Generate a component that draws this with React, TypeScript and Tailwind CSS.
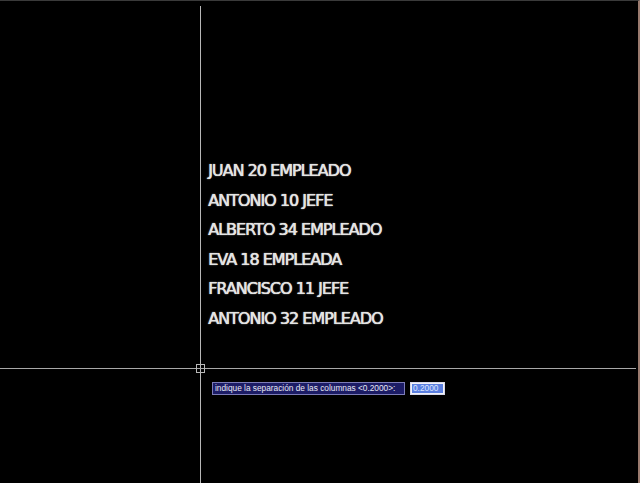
const rows = [
  'JUAN 20 EMPLEADO',
  'ANTONIO 10 JEFE',
  'ALBERTO 34 EMPLEADO',
  'EVA 18 EMPLEADA',
  'FRANCISCO 11 JEFE',
  'ANTONIO 32 EMPLEADO',
]

export default function App() {
  return (
    <div className="relative h-[483px] w-[640px] overflow-hidden border-t border-r-2 border-t-[#3a3a3a] border-r-[#9a7a6e] bg-black">
      {/* texto del dibujo */}
      <div className="flex flex-col gap-[9.5px] pl-[208px] pt-[160px] font-['DejaVu_Sans',sans-serif] text-[16px] leading-[20px] tracking-[-1px] text-[#e4e4e4] [text-shadow:0.4px_0_0_#e4e4e4,0_0_1.5px_#aaa]">
        {rows.map((r, i) => (
          <div key={i}>{r}</div>
        ))}
      </div>

      {/* cursor en cruz */}
      <div className="absolute top-[5px] bottom-0 left-[200px] w-px bg-[#b8b8b8]" />
      <div className="absolute top-[367px] left-0 h-px w-[636px] bg-[#a8a8a8]" />
      <div className="absolute top-[363px] left-[196px] h-[9px] w-[9px] border border-[#b8b8b8]" />

      {/* línea de comando dinámica */}
      <div className="absolute top-[381px] left-[212px] flex items-center gap-[5px] font-['Liberation_Sans',sans-serif] text-[8.3px] leading-none">
        <div className="flex h-[13px] w-[193px] items-center overflow-hidden whitespace-nowrap border border-[#7c7cb8] bg-[#1c1c66] px-[2px] text-[#e8e8f4]">
          indique la separación de las columnas &lt;0.2000&gt;:
        </div>
        <div className="flex h-[13px] w-[35px] items-center border border-[#d8d8e8] bg-[#f2f2f8] p-[1px]">
          <span className="flex h-full w-full items-center bg-[#5a7ee0] px-[1px] text-[#dde6ff]">0.2000</span>
        </div>
      </div>
    </div>
  )
}
